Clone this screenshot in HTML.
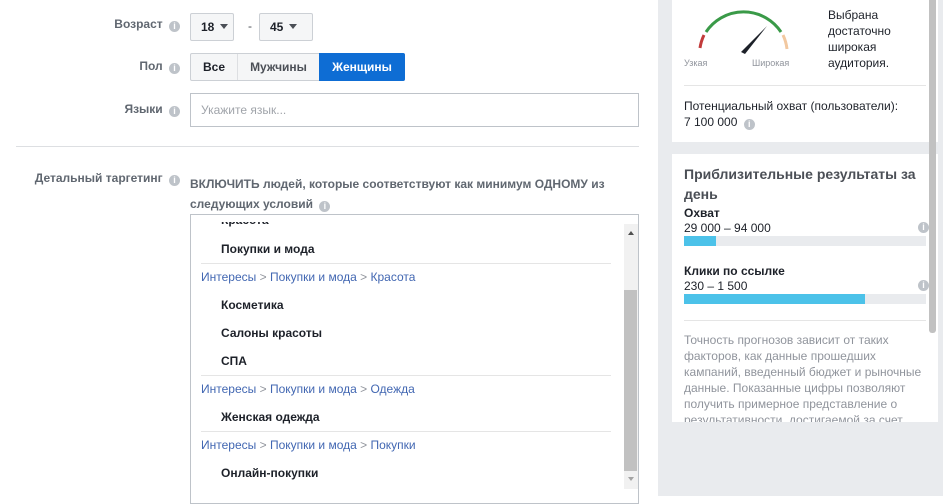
<!DOCTYPE html>
<html><head><meta charset="utf-8"><style>
*{box-sizing:border-box;margin:0;padding:0}
body{width:943px;height:496px;overflow:hidden;background:#fff;font-family:"Liberation Sans",Arial,sans-serif;font-size:12px;color:#1d2129;position:relative}
.abs{position:absolute}
.lbl{position:absolute;right:0;color:#606770;font-size:12px;font-weight:bold;text-align:right}
.info{display:inline-block;width:11px;height:11px;border-radius:50%;background:#bec3c9;color:#fff;font-size:9px;line-height:11px;text-align:center;font-weight:bold;vertical-align:-1px;margin-left:3px}
.sel{position:absolute;height:28px;border:1px solid #ccd0d5;background:#f5f6f7;border-radius:2px;font-weight:bold;font-size:12px;line-height:26px;padding-left:10px}
.tri{display:inline-block;width:0;height:0;border-left:4px solid transparent;border-right:4px solid transparent;border-top:5px solid #4b4f56;margin-left:6px;vertical-align:2px}
.row{position:absolute;left:221px;font-weight:bold;font-size:12px;color:#1d2129}
.crumb{position:absolute;left:201px;color:#4267b2;font-size:12px}
.crumb span{color:#90949c}
.sep{position:absolute;left:201px;width:410px;height:1px;background:#e5e5e5}
</style></head><body>
<div class="abs" style="left:0;top:0;width:180px">
<div class="lbl" style="top:17px">Возраст <span class="info">i</span></div>
<div class="lbl" style="top:59px">Пол <span class="info">i</span></div>
<div class="lbl" style="top:102px">Языки <span class="info">i</span></div>
<div class="lbl" style="top:171px">Детальный таргетинг <span class="info">i</span></div>
</div>
<div class="sel" style="left:190px;top:13px;width:44px">18<span class="tri"></span></div>
<div class="abs" style="left:248px;top:19px;color:#4b4f56">-</div>
<div class="sel" style="left:259px;top:13px;width:54px">45<span class="tri"></span></div>
<div class="abs" style="left:190px;top:53px;height:28px;width:215px;border:1px solid #ccd0d5;border-radius:2px;background:#f5f6f7;font-weight:bold;line-height:26px;font-size:12px">
<span class="abs" style="left:0;width:47px;text-align:center;border-right:1px solid #dddfe2;height:26px">Все</span>
<span class="abs" style="left:47px;width:81px;text-align:center;height:26px;color:#4b4f56">Мужчины</span>
<span class="abs" style="left:128px;top:-1px;width:86px;height:28px;line-height:28px;text-align:center;background:#0e6dd4;color:#fff;border-radius:0 2px 2px 0">Женщины</span>
</div>
<div class="abs" style="left:190px;top:93px;width:449px;height:34px;border:1px solid #bec3c9;color:#a0a4aa;padding-left:10px;line-height:32px;font-size:12px">Укажите язык...</div>
<div class="abs" style="left:16px;top:146px;width:623px;height:1px;background:#dddfe2"></div>
<div class="abs" style="left:190px;top:174px;width:430px;font-weight:bold;color:#606770;line-height:20px;font-size:12px">ВКЛЮЧИТЬ людей, которые соответствуют как минимум ОДНОМУ из следующих условий <span class="info">i</span></div>
<div class="abs" style="left:190px;top:214px;width:449px;height:290px;border:1px solid #bec3c9;overflow:hidden">
<div class="abs" style="left:433px;top:9px;width:14px;height:265px;background:#f1f1f1"></div>
<div class="abs" style="left:433px;top:75px;width:13px;height:181px;background:#c1c1c1"></div>
<div class="abs" style="left:437px;top:16px;border-left:3px solid transparent;border-right:3px solid transparent;border-bottom:4px solid #505050"></div>
<div class="abs" style="left:437px;top:262px;border-left:3px solid transparent;border-right:3px solid transparent;border-top:4px solid #a3a3a3"></div>
</div>
<div class="row" style="top:213px">Красота</div>
<div class="abs" style="left:191px;top:215px;width:430px;height:7px;background:#fff"></div>
<div class="row" style="top:242px">Покупки и мода</div>
<div class="sep" style="top:263px"></div>
<div class="crumb" style="top:270px">Интересы <span>&gt;</span> Покупки и мода <span>&gt;</span> Красота</div>
<div class="row" style="top:298px">Косметика</div>
<div class="row" style="top:326px">Салоны красоты</div>
<div class="row" style="top:354px">СПА</div>
<div class="sep" style="top:375px"></div>
<div class="crumb" style="top:382px">Интересы <span>&gt;</span> Покупки и мода <span>&gt;</span> Одежда</div>
<div class="row" style="top:410px">Женская одежда</div>
<div class="sep" style="top:431px"></div>
<div class="crumb" style="top:438px">Интересы <span>&gt;</span> Покупки и мода <span>&gt;</span> Покупки</div>
<div class="row" style="top:466px">Онлайн-покупки</div>

<div class="abs" style="left:658px;top:0;width:285px;height:496px;background:#e9ebee">
<div class="abs" style="left:14px;top:0;width:266px;height:142px;background:#fff">
<svg class="abs" style="left:22px;top:2px" width="100" height="55" viewBox="0 0 100 55">
<path d="M6 46 A45 45 0 0 1 10 33" stroke="#c23b3b" stroke-width="3" fill="none"/>
<path d="M12 30 A45 45 0 0 1 87 30" stroke="#3a9a48" stroke-width="3" fill="none"/>
<path d="M89 33 A45 45 0 0 1 93 47" stroke="#f2c8a0" stroke-width="3" fill="none"/>
<path d="M47 50 L73 24 L51 52 Z" fill="#1d2129"/>
</svg>
<div class="abs" style="left:12px;top:58px;font-size:9px;color:#90949c">Узкая</div>
<div class="abs" style="left:80px;top:58px;font-size:9px;color:#90949c">Широкая</div>
<div class="abs" style="left:156px;top:7px;font-size:12px;line-height:16px;color:#1d2129">Выбрана<br>достаточно<br>широкая<br>аудитория.</div>
<div class="abs" style="left:12px;top:85px;width:242px;height:1px;background:#e5e5e5"></div>
<div class="abs" style="left:12px;top:98px;font-size:12px;line-height:16px;color:#1d2129">Потенциальный охват (пользователи):<br>7 100 000 <span class="info">i</span></div>
</div>
<div class="abs" style="left:14px;top:154px;width:266px;height:268px;background:#fff;overflow:hidden">
<div class="abs" style="left:12px;top:10px;width:250px;font-weight:bold;font-size:14px;line-height:20px;color:#4b4f56">Приблизительные результаты за день</div>
<div class="abs" style="left:12px;top:52px;font-weight:bold;font-size:12px">Охват</div>
<div class="abs" style="left:12px;top:67px;font-size:12px">29 000 – 94 000</div>
<span class="info abs" style="left:243px;top:68px">i</span>
<div class="abs" style="left:12px;top:82px;width:242px;height:10px;background:#e9ebee"><div style="width:32px;height:10px;background:#4cc2e9"></div></div>
<div class="abs" style="left:12px;top:110px;font-weight:bold;font-size:12px">Клики по ссылке</div>
<div class="abs" style="left:12px;top:125px;font-size:12px">230 – 1 500</div>
<span class="info abs" style="left:243px;top:126px">i</span>
<div class="abs" style="left:12px;top:140px;width:242px;height:10px;background:#e9ebee"><div style="width:181px;height:10px;background:#4cc2e9"></div></div>
<div class="abs" style="left:12px;top:166px;width:242px;height:1px;background:#e5e5e5"></div>
<div class="abs" style="left:12px;top:178px;width:250px;font-size:12px;line-height:16px;color:#90949c">Точность прогнозов зависит от таких факторов, как данные прошедших кампаний, введенный бюджет и рыночные данные. Показанные цифры позволяют получить примерное представление о результативности, достигаемой за счет</div>
</div>
<div class="abs" style="left:271px;top:0;width:7px;height:333px;background:#c1c1c1;border-radius:0 0 3px 3px"></div>
</div>
</body></html>
